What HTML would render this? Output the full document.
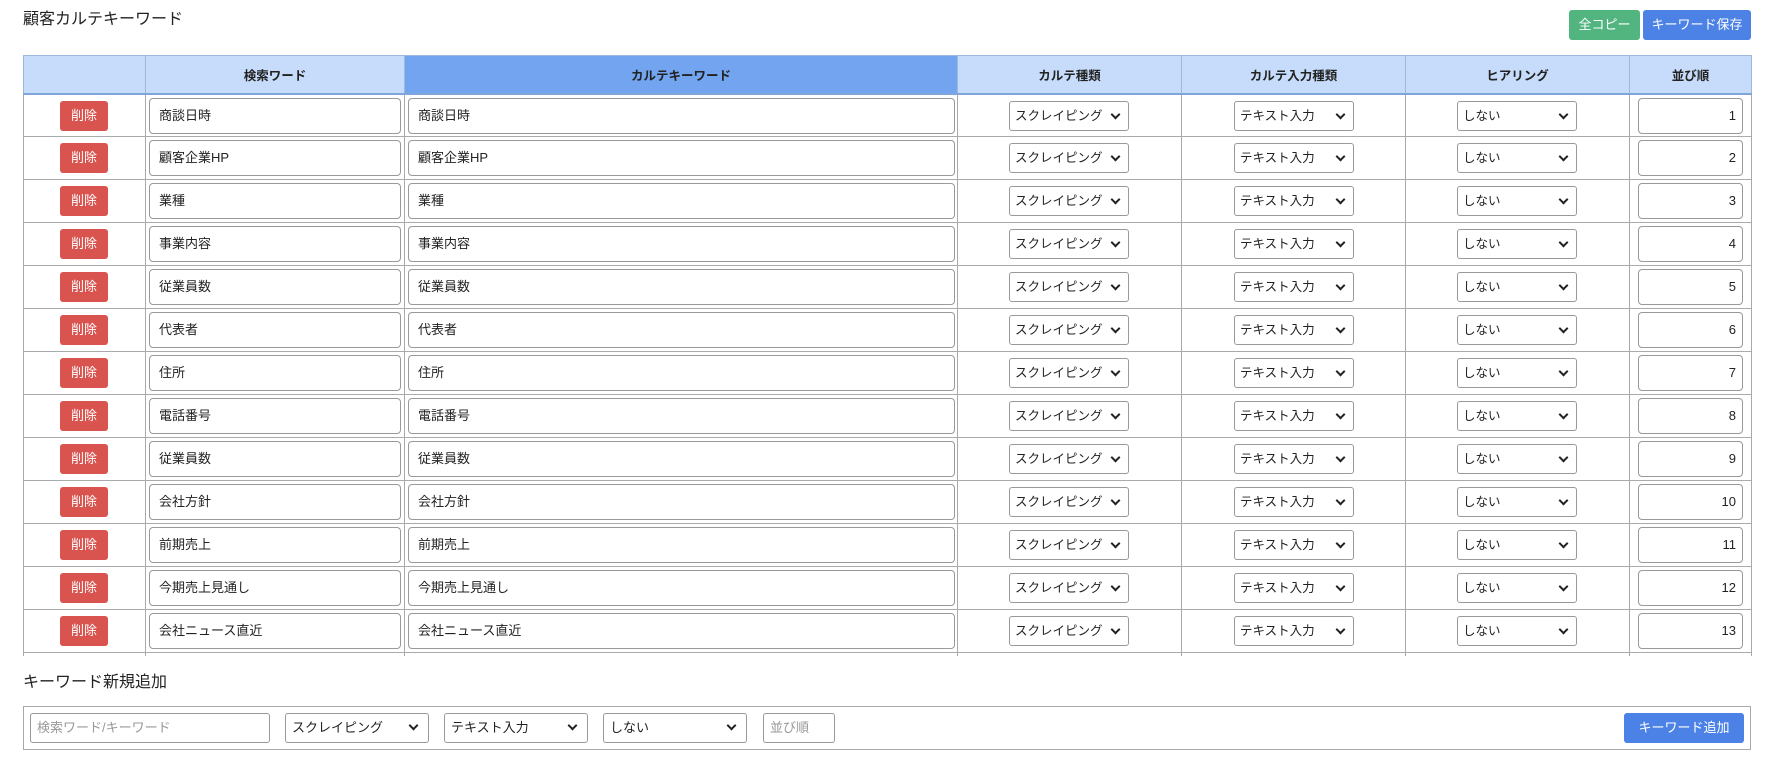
<!DOCTYPE html>
<html><head><meta charset="utf-8"><style>
*{box-sizing:border-box;margin:0;padding:0}
body{width:1787px;height:762px;background:#fff;font-family:"Liberation Sans","Noto Sans CJK JP",sans-serif;color:#222;position:relative;overflow:hidden;font-size:13px}
.abs{position:absolute}
.title{left:23px;top:9px;font-size:16px;line-height:22px}
.btn{position:absolute;color:#fff;border-radius:3px;font-size:13px;text-align:center}
.wrap{position:absolute;left:23px;top:55px;width:1730px;height:601px;overflow:hidden}
table{border-collapse:collapse;table-layout:fixed;width:1728px}
th{height:38px;background:#c6dcfa;border:1px solid #9cb8dc;border-bottom:2px solid #7fa6d9;font-size:12.5px;font-weight:bold}
th.dk{background:#72a4f0}
td{height:43px;border:1px solid #aaa;position:relative}
.del{position:absolute;left:36px;top:6px;width:48px;height:30px;background:#d9534f;color:#fff;border-radius:3px;text-align:center;line-height:30px;font-size:13px}
.inp{position:absolute;top:3px;height:36px;border:1px solid #999;border-radius:4px;padding-left:9px;line-height:34px;font-size:13px;background:#fff}
.sel{position:absolute;top:6px;width:120px;height:30px;border:1px solid #999;border-radius:3px;padding-left:5px;line-height:28px;font-size:12.5px;background:#fff}
.sel:after{content:"";position:absolute;right:9px;top:9px;width:5px;height:5px;border-right:2px solid #222;border-bottom:2px solid #222;transform:rotate(45deg)}
.num{position:absolute;top:3px;left:8px;width:105px;height:36px;border:1px solid #999;border-radius:4px;text-align:right;padding-right:6px;line-height:34px;background:#fff}
.box{position:absolute;left:23px;top:706px;width:1728px;height:44px;border:1px solid #aaa}
.bi{position:absolute;top:713px;height:30px;border:1px solid #999;border-radius:3px;line-height:28px;padding-left:6px;background:#fff}
.bs:after{content:"";position:absolute;right:11px;top:8px;width:5px;height:5px;border-right:2px solid #222;border-bottom:2px solid #222;transform:rotate(45deg)}
.ph{color:#999}
</style></head><body>
<div class="abs title">顧客カルテキーワード</div>
<div class="btn" style="left:1569px;top:10px;width:71px;height:30px;line-height:30px;background:#52b57f">全コピー</div>
<div class="btn" style="left:1643px;top:10px;width:108px;height:30px;line-height:30px;background:#4c82e6">キーワード保存</div>
<div class="wrap"><table>
<colgroup><col style="width:122px"><col style="width:259px"><col style="width:553px"><col style="width:224px"><col style="width:224px"><col style="width:224px"><col style="width:122px"></colgroup>
<tr><th></th><th>検索ワード</th><th class="dk">カルテキーワード</th><th>カルテ種類</th><th>カルテ入力種類</th><th>ヒアリング</th><th>並び順</th></tr>
<tbody id="b"></tbody>
</table></div>
<div class="abs" style="left:23px;top:672px;font-size:16px;line-height:22px">キーワード新規追加</div>
<div class="box"></div>
<div class="bi ph" style="left:30px;width:240px">検索ワード/キーワード</div>
<div class="bi bs" style="left:285px;width:144px">スクレイピング</div>
<div class="bi bs" style="left:444px;width:144px">テキスト入力</div>
<div class="bi bs" style="left:603px;width:144px">しない</div>
<div class="bi ph" style="left:763px;width:72px">並び順</div>
<div class="btn" style="left:1624px;top:713px;width:120px;height:30px;line-height:30px;background:#4c82e6">キーワード追加</div>
<script>
var w=["商談日時","顧客企業HP","業種","事業内容","従業員数","代表者","住所","電話番号","従業員数","会社方針","前期売上","今期売上見通し","会社ニュース直近",""];
var h="";
w.forEach(function(x,i){
 if(i<13){
 h+='<tr><td><div class="del">削除</div></td><td><div class="inp" style="left:3px;width:252px">'+x+'</div></td><td><div class="inp" style="left:3px;width:547px">'+x+'</div></td><td><div class="sel" style="left:51px">スクレイピング</div></td><td><div class="sel" style="left:52px">テキスト入力</div></td><td><div class="sel" style="left:51px">しない</div></td><td><div class="num">'+(i+1)+'</div></td></tr>';
 } else h+='<tr><td></td><td></td><td></td><td></td><td></td><td></td><td></td></tr>';
});
document.getElementById("b").innerHTML=h;
</script>
</body></html>
